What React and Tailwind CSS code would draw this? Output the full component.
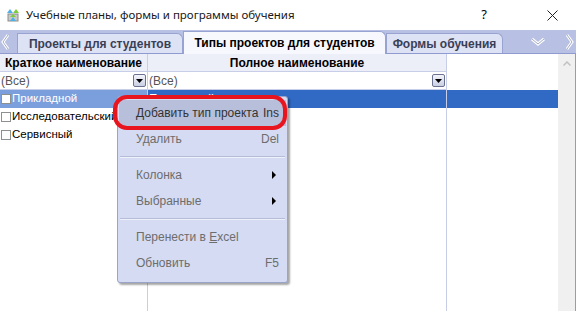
import { useState } from "react";

const ui = { fontFamily: "'Liberation Sans', Arial, sans-serif" };
const segoe = { fontFamily: "'Noto Sans', 'Open Sans', sans-serif" };

function AppIcon() {
  return (
    <svg width="14" height="14" viewBox="0 0 14 14">
      <rect x="2" y="6" width="10" height="7" fill="#c9c9c9" stroke="#8d8d8d" />
      <path d="M1 5 L4 1 L7 5 Z" fill="#4fb0e8" />
      <path d="M7 5 L10 1 L13 5 Z" fill="#7ccc3c" />
      <path d="M4 9 L7 6 L10 9 Z" fill="#7ccc3c" />
      <path d="M4 13 L7 9 L10 13 Z" fill="#4fb0e8" />
    </svg>
  );
}

function DropBtn() {
  return (
    <span className="w-[13px] h-[13px] border border-[#6a7290] rounded-[2px] bg-gradient-to-b from-[#f4f5fb] to-[#c9cee3] flex items-center justify-center">
      <svg width="7" height="4" viewBox="0 0 7 4">
        <path d="M0 0 H7 L3.5 4 Z" fill="#000" />
      </svg>
    </span>
  );
}

function Check() {
  return <span className="w-[10px] h-[10px] border border-[#8e8f8f] bg-white shrink-0" />;
}

const menu = [
  { label: "Добавить тип проекта", key: "Ins", active: true },
  { label: "Удалить", key: "Del" },
  { sep: true },
  { label: "Колонка", sub: true },
  { label: "Выбранные", sub: true },
  { sep: true },
  { label: "Перенести в Excel", excel: true },
  { label: "Обновить", key: "F5" },
];

export default function App() {
  const [rows] = useState(["Прикладной", "Исследовательский", "Сервисный"]);

  return (
    <div className="relative w-[576px] h-[311px] overflow-hidden bg-white text-black whitespace-nowrap" style={ui}>
      {/* title bar */}
      <div className="h-[30px] flex items-center pl-[6px]">
        <AppIcon />
        <span className="ml-[6px] text-[11.5px] text-[#1a1a1a]" style={segoe}>
          Учебные планы, формы и программы обучения
        </span>
        <span className="ml-auto mr-[60px] text-[13px]" style={segoe}>?</span>
        <svg width="11" height="11" viewBox="0 0 11 11" className="mr-[18px]">
          <path d="M0.5 0.5 L10.5 10.5 M10.5 0.5 L0.5 10.5" stroke="#222" strokeWidth="1" />
        </svg>
      </div>

      {/* tab strip */}
      <div className="h-[24px] bg-[#b8c1e3] flex items-end border-b border-[#8e9ad0] relative">
        <svg width="10" height="16" viewBox="0 0 10 16" className="absolute left-[1px] top-[4px]">
          <path d="M7 1 L2 8 L7 15" stroke="#fff" strokeWidth="3" fill="none" />
          <path d="M7 1 L2 8 L7 15" stroke="#a4abc8" strokeWidth="1" fill="none" />
        </svg>
        <div className="ml-[17px] w-[166px] h-[20px] bg-[#dde2f5] border border-b-0 border-[#98a3d2] rounded-tr-[6px] flex items-center justify-center text-[12px] font-bold text-[#3a3f55]">
          Проекты для студентов
        </div>
        <div className="w-[203px] h-[23px] bg-[#f7f8fd] border border-b-0 border-[#98a3d2] rounded-tr-[6px] flex items-center justify-center text-[12px] font-bold text-black -mb-px">
          Типы проектов для студентов
        </div>
        <div className="w-[117px] h-[20px] bg-[#dde2f5] border border-b-0 border-[#98a3d2] rounded-tr-[6px] flex items-center justify-center text-[12px] font-bold text-[#3a3f55]">
          Формы обучения
        </div>
        <svg width="16" height="10" viewBox="0 0 16 10" className="absolute left-[530px] top-[7px]">
          <path d="M2 2 L8 7 L14 2" stroke="#fff" strokeWidth="3" fill="none" />
          <path d="M2 2 L8 7 L14 2" stroke="#a4abc8" strokeWidth="1" fill="none" />
        </svg>
        <svg width="10" height="16" viewBox="0 0 10 16" className="absolute left-[564px] top-[4px]">
          <path d="M3 1 L8 8 L3 15" stroke="#fff" strokeWidth="3" fill="none" />
          <path d="M3 1 L8 8 L3 15" stroke="#a4abc8" strokeWidth="1" fill="none" />
        </svg>
      </div>

      {/* grid */}
      <div className="flex h-[257px] border-r border-[#8e9ad0]">
        <div className="w-[148px] border-r border-[#c8cde8] flex flex-col overflow-hidden">
          <div className="h-[18px] bg-[#eceef8] border-b border-[#c8cde8] flex items-center pl-[5px] text-[12px] font-bold">
            Краткое наименование
          </div>
          <div className="h-[18px] border-b border-[#c8cde8] flex items-center justify-between pl-px pr-px text-[12px] text-[#555]">
            (Все)
            <DropBtn />
          </div>
          {rows.map((r, i) => (
            <div
              key={r}
              className={
                "h-[18px] flex items-center gap-px pl-px text-[11.5px] " +
                (i === 0 ? "bg-[#7b9fdc] text-white" : "text-black")
              }
            >
              <Check />
              {r}
            </div>
          ))}
        </div>
        <div className="w-[299px] border-r border-[#c8cde8] flex flex-col">
          <div className="h-[18px] bg-[#eceef8] border-b border-[#c8cde8] flex items-center justify-center text-[12px] font-bold">
            Полное наименование
          </div>
          <div className="h-[18px] border-b border-[#c8cde8] flex items-center justify-between pl-px pr-px text-[12px] text-[#555]">
            (Все)
            <DropBtn />
          </div>
          <div className="h-[18px] bg-[#316ac5] text-white text-[11.5px] flex items-center pl-px">
            Прикладной проект
          </div>
        </div>
        <div className="flex-1 flex flex-col">
          <div className="h-[36px]" />
          <div className="h-[18px] bg-[#316ac5]" />
        </div>
        <div className="w-[17px] bg-[#f0f0f0] flex justify-center pt-[7px]">
          <svg width="8" height="5" viewBox="0 0 8 5">
            <path d="M0.5 4.5 L4 1 L7.5 4.5" stroke="#c2c2c2" strokeWidth="1.5" fill="none" />
          </svg>
        </div>
      </div>

      {/* context menu */}
      <div className="absolute left-[117px] top-[96px] w-[171px] h-[187px] bg-[#d5dbf2] border border-[#9aa3c8] rounded-[3px] shadow-[2px_2px_2px_rgba(0,0,0,0.35)] py-[3px] flex flex-col">
        {menu.map((m, i) =>
          m.sep ? (
            <div key={i} className="mx-[2px] my-[4px] h-px bg-[#b5bcd8] border-b border-[#eef0fa] box-content" />
          ) : (
            <div
              key={i}
              className={
                "relative h-[26px] mx-px flex items-center pl-[17px] pr-[7px] text-[12px] " +
                (m.active ? "bg-[#b7bfdb] text-[#333]" : "text-[#6d6d6d]")
              }
            >
              <span>
                {m.excel ? (
                  <>
                    Перенести в <span className="underline">E</span>xcel
                  </>
                ) : (
                  m.label
                )}
              </span>
              {m.key && <span className="ml-auto">{m.key}</span>}
              {m.sub && (
                <svg width="4" height="8" viewBox="0 0 4 8" className="ml-auto mr-[3px]">
                  <path d="M0 0 L4 4 L0 8 Z" fill="#000" />
                </svg>
              )}
              {m.active && (
                <span className="absolute -left-[6px] -top-[5px] w-[174px] h-[35px] border-[4px] border-[#e8141e] rounded-[14px] pointer-events-none" />
              )}
            </div>
          )
        )}
      </div>
    </div>
  );
}
